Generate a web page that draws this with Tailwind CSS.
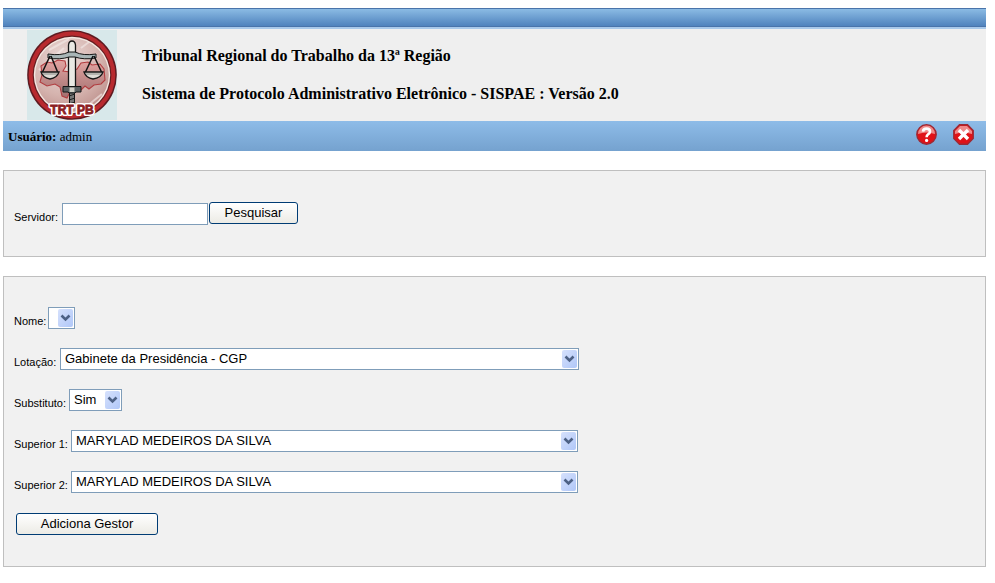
<!DOCTYPE html>
<html lang="pt-BR">
<head>
  <meta charset="UTF-8" />
  <meta name="viewport" content="width=device-width, initial-scale=1.0"/>
  <title>SISPAE - Gestores</title>
  <script src="https://cdn.jsdelivr.net/npm/@tailwindcss/browser@4"></script>
</head>
<body class="bg-white pt-2 pr-[9px] pl-[3px] text-black font-['Liberation_Sans',Arial,sans-serif]">

  <!-- Setas das listas -->
  <svg class="hidden">
    <symbol id="seta" viewBox="0 0 15 18">
      <path d="M3.5 6.5 L7.5 10.5 L11.5 6.5" fill="none" stroke="#4d6185" stroke-width="2.6"/>
    </symbol>
  </svg>

  <!-- Cabeçalho -->
  <header>
    <div class="h-[19px] border-y border-[#4a74aa] bg-linear-to-b from-[#8bbbe4] to-[#5083bd]"></div>
    <div class="h-[2px] bg-[#a9c9ea]"></div>
    <div class="flex h-[92px] items-center bg-[#efefef] pl-6 font-['Liberation_Serif','Times_New_Roman',serif]">
      <svg class="size-[90px] shrink-0" viewBox="0 0 90 90" role="img" aria-label="TRT PB">
        <defs>
          <radialGradient id="fundo" cx="0.4" cy="0.3" r="0.8">
            <stop offset="0" stop-color="#ecdcda"/>
            <stop offset="0.6" stop-color="#d5b3ae"/>
            <stop offset="1" stop-color="#b98a86"/>
          </radialGradient>
          <linearGradient id="mapa" x1="0" y1="0" x2="0" y2="1">
            <stop offset="0" stop-color="#e3a5a2"/>
            <stop offset="1" stop-color="#a06f6f"/>
          </linearGradient>
        </defs>
        <rect width="90" height="90" fill="#d8e8ea"/>
        <circle cx="45" cy="45" r="44.8" fill="#5e1a20"/>
        <circle cx="45" cy="45" r="43.4" fill="#b82a2f"/>
        <circle cx="45" cy="45" r="39.4" fill="#651d20"/>
        <circle cx="45" cy="45" r="38.2" fill="#f3e8e2"/>
        <circle cx="45" cy="45" r="36.8" fill="url(#fundo)"/>
        <path d="M22 20 L42 9 M12 40 L37 18 M54 18 L62 12 M55 80 L75 64" stroke="#f5ebe9" stroke-width="2" opacity="0.6"/>
        <path d="M14 36 L20 32 L25 33 L31 30 L38 31 L39 36 L36 41 L43 42 L50 39 L54 33 L61 32 L65 35 L73 34 L77 39 L78 50 L74 54 L67 55 L62 59 L58 56 L54 60 L49 57 L43 62 L40 68 L35 66 L33 57 L28 54 L20 56 L13 52 L15 45 Z" fill="url(#mapa)" stroke="#b23d40" stroke-width="1.1"/>
        <!-- Espada e balança -->
        <path d="M41.5 58 V15 Q42 11 45 11 Q48 11 48.5 15 V58 Z" fill="#e9e9e4" stroke="#161616" stroke-width="1.3"/>
        <path d="M21 24 Q34 26 42 22 H48 Q56 26 69 24 V28 Q57 30 48 27 H42 Q33 30 21 28 Z" fill="#a9b6b7" stroke="#161616" stroke-width="1"/>
        <path d="M23 26 L15 43 M24 26 L31 43 M66 26 L58 43 M67 26 L75 43" stroke="#111" stroke-width="1.5"/>
        <path d="M14 42 H32 Q30 48 23 49 Q16 48 14 42 Z M57 42 H76 Q74 48 66 49 Q59 48 57 42 Z" fill="#dedcd6" stroke="#161616" stroke-width="1.3"/>
        <path d="M16 44 H30 M59 44 H74" stroke="#8a8b87" stroke-width="1"/>
        <rect x="42.5" y="62" width="5" height="15" fill="#777" stroke="#161616"/>
        <path d="M42 66 L48 64 M42 70 L48 68 M42 74 L48 72" stroke="#202020"/>
        <path d="M36 56.5 H54 V62 H49 L48 63 H42 L41 62 H36 Z" fill="#5b6062" stroke="#161616"/>
        <rect x="42.5" y="57.5" width="5" height="4.5" fill="#d3d1c8"/>
        <text x="45" y="84" text-anchor="middle" font-family="Liberation Sans, Arial, sans-serif" font-size="12" font-weight="bold" fill="#fff" stroke="#fff" stroke-width="4" stroke-linejoin="round" aria-hidden="true">TRT PB</text>
        <text x="45" y="84" text-anchor="middle" font-family="Liberation Sans, Arial, sans-serif" font-size="12" font-weight="bold" fill="#8b2023" stroke="#8b2023" stroke-width="0.8">TRT PB</text>
      </svg>
      <div class="pl-[25px] text-base font-bold">
        <h1 class="leading-[38px]">Tribunal Regional do Trabalho da 13ª Região</h1>
        <h2 class="leading-[38px]">Sistema de Protocolo Administrativo Eletrônico - SISPAE : Versão 2.0</h2>
      </div>
    </div>
    <div class="flex h-[30px] items-center justify-between bg-linear-to-b from-[#8ebce8] to-[#75a2cf] pr-3 pl-[5px]">
      <p class="pt-[2px] font-['Liberation_Serif','Times_New_Roman',serif] text-[13px]"><b>Usuário:</b> admin</p>
      <nav class="flex gap-4 pb-1">
        <a href="#" aria-label="Ajuda">
          <svg class="size-[21px]" viewBox="0 0 21 21">
            <circle cx="10.5" cy="10.5" r="9.7" fill="#e01217" stroke="#9c2a35" stroke-width="1.4"/>
            <path d="M2 10 A8.5 8.5 0 0 1 19 10 Q10 7 2 10 Z" fill="#f08a8a"/>
            <path d="M7 7.6 Q7.2 4.6 10.6 4.6 Q14 4.6 14 7.5 Q14 9.2 12 10.3 Q10.6 11.2 10.6 13.2" fill="none" stroke="#fff" stroke-width="2.6"/>
            <circle cx="10.6" cy="16.4" r="1.6" fill="#fff"/>
          </svg>
        </a>
        <a href="#" aria-label="Sair">
          <svg class="size-[21px]" viewBox="0 0 21 21">
            <path d="M6.5 0.8 H14.5 L20.2 6.5 V14.5 L14.5 20.2 H6.5 L0.8 14.5 V6.5 Z" fill="#e01217" stroke="#9c2a35" stroke-width="1.4"/>
            <path d="M7 2 H14 L19 7 V10 Q10 7 2 10 V7 Z" fill="#f08a8a"/>
            <path d="M6 6 L15 15 M15 6 L6 15" stroke="#fff" stroke-width="3.4"/>
          </svg>
        </a>
      </nav>
    </div>
  </header>

  <!-- Pesquisa do servidor -->
  <form class="mt-[19px] border border-[#bfbfbf] bg-[#f1f1f1] py-[31px] pl-[10px]">
    <div class="flex items-end">
      <label for="servidor" class="w-12 shrink-0 text-[11px] leading-4">Servidor:</label>
      <input id="servidor" type="text" class="h-[22px] w-[146px] border border-[#7f9db9] bg-white px-1 text-[13px]"/>
      <button type="button" class="mb-px ml-px h-[22px] w-[89px] rounded-[3px] border border-[#003c74] bg-linear-to-b from-white to-[#ecebe5] text-[13px] leading-5">Pesquisar</button>
    </div>
  </form>

  <!-- Dados do gestor -->
  <form class="mt-[19px] flex flex-col items-start gap-[19px] border border-[#bfbfbf] bg-[#f1f1f1] pt-[30px] pb-[31px] pl-[10px]">
    <div class="flex items-end">
      <label for="nome" class="w-[34px] shrink-0 text-[11px] leading-4">Nome:</label>
      <div class="relative">
        <select id="nome" class="block h-[22px] w-[27px] appearance-none border border-[#7f9db9] bg-white"></select>
        <svg class="pointer-events-none absolute top-[2px] right-[2px] h-[18px] w-[15px] rounded-[2px] bg-linear-to-br from-[#d6e1fc] to-[#b0c7f8]"><use href="#seta"/></svg>
      </div>
    </div>
    <div class="flex items-end">
      <label for="lotacao" class="w-[46px] shrink-0 text-[11px] leading-4">Lotação:</label>
      <div class="relative">
        <select id="lotacao" class="block h-[22px] w-[519px] appearance-none border border-[#7f9db9] bg-white pl-1 text-[13px] leading-5">
          <option>Gabinete da Presidência - CGP</option>
        </select>
        <svg class="pointer-events-none absolute top-[2px] right-[2px] h-[18px] w-[15px] rounded-[2px] bg-linear-to-br from-[#d6e1fc] to-[#b0c7f8]"><use href="#seta"/></svg>
      </div>
    </div>
    <div class="flex items-end">
      <label for="substituto" class="w-[55px] shrink-0 text-[11px] leading-4">Substituto:</label>
      <div class="relative">
        <select id="substituto" class="block h-[22px] w-[53px] appearance-none border border-[#7f9db9] bg-white pl-1 text-[13px] leading-5">
          <option>Sim</option>
          <option>Não</option>
        </select>
        <svg class="pointer-events-none absolute top-[2px] right-[2px] h-[18px] w-[15px] rounded-[2px] bg-linear-to-br from-[#d6e1fc] to-[#b0c7f8]"><use href="#seta"/></svg>
      </div>
    </div>
    <div class="flex items-end">
      <label for="superior1" class="w-[57px] shrink-0 text-[11px] leading-4">Superior 1:</label>
      <div class="relative">
        <select id="superior1" class="block h-[22px] w-[507px] appearance-none border border-[#7f9db9] bg-white pl-1 text-[13px] leading-5">
          <option>MARYLAD MEDEIROS DA SILVA</option>
        </select>
        <svg class="pointer-events-none absolute top-[2px] right-[2px] h-[18px] w-[15px] rounded-[2px] bg-linear-to-br from-[#d6e1fc] to-[#b0c7f8]"><use href="#seta"/></svg>
      </div>
    </div>
    <div class="flex items-end">
      <label for="superior2" class="w-[57px] shrink-0 text-[11px] leading-4">Superior 2:</label>
      <div class="relative">
        <select id="superior2" class="block h-[22px] w-[507px] appearance-none border border-[#7f9db9] bg-white pl-1 text-[13px] leading-5">
          <option>MARYLAD MEDEIROS DA SILVA</option>
        </select>
        <svg class="pointer-events-none absolute top-[2px] right-[2px] h-[18px] w-[15px] rounded-[2px] bg-linear-to-br from-[#d6e1fc] to-[#b0c7f8]"><use href="#seta"/></svg>
      </div>
    </div>
    <button type="submit" class="mt-px ml-[2px] h-[22px] w-[142px] rounded-[3px] border border-[#003c74] bg-linear-to-b from-white to-[#ecebe5] text-[13px] leading-5">Adiciona Gestor</button>
  </form>
</body>
</html>
